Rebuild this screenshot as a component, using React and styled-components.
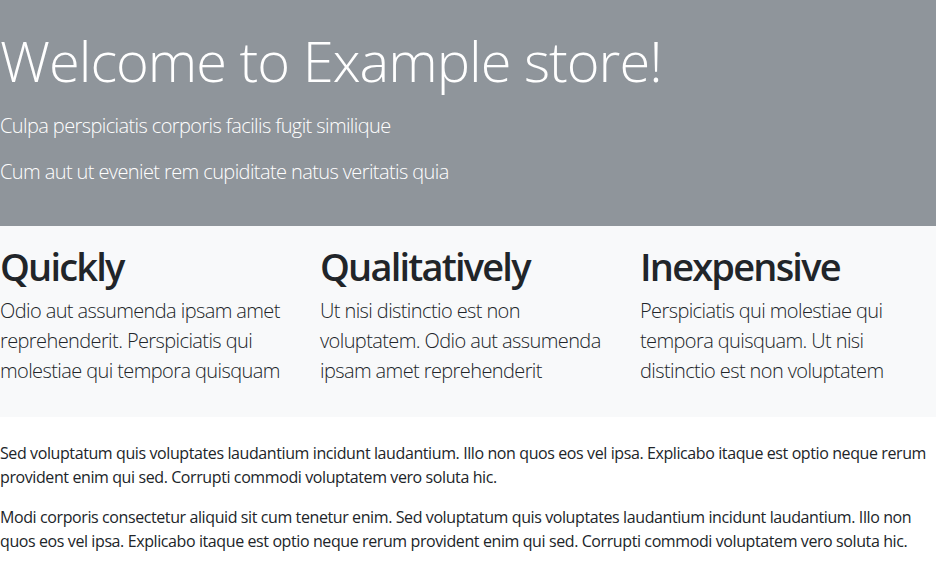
import React from "react";
import styled, { createGlobalStyle } from "styled-components";

const GlobalStyle = createGlobalStyle`
  body {
    margin: 0;
    font-family: "Open Sans", "Noto Sans", sans-serif;
    color: #212529;
    background: #fff;
  }
`;

const Hero = styled.header`
  background-color: #8f959b;
  color: #fff;
  padding: 27px 0 23px;
`;

const HeroTitle = styled.h1`
  margin: 0 0 17px;
  font-size: 56px;
  font-weight: 300;
  line-height: 67px;
  letter-spacing: -1px;
`;

const Lead = styled.p`
  margin: 0 0 16px;
  font-size: 20px;
  font-weight: 300;
  line-height: 30px;
  letter-spacing: -0.6px;
  color: ${(p) => p.$color || "inherit"};
`;

const Features = styled.section`
  background-color: #f8f9fa;
  padding: 16px 0 15px;
  margin-bottom: 24px;
`;

const FeatureGrid = styled.div`
  display: grid;
  grid-template-columns: repeat(3, 290px);
  column-gap: 30px;
`;

const Feature = styled.div`
  display: flex;
  flex-direction: column;
`;

const FeatureTitle = styled.h2`
  margin: 0 0 6px;
  font-size: 38px;
  font-weight: 600;
  line-height: 48px;
  letter-spacing: -1.8px;
  color: #212529;
`;

const Body = styled.main`
  padding: 0;
`;

const Paragraph = styled.p`
  margin: 0 0 16px;
  font-size: 16px;
  line-height: 24px;
  letter-spacing: -0.4px;
`;

const features = [
  {
    title: "Quickly",
    text: "Odio aut assumenda ipsam amet reprehenderit. Perspiciatis qui molestiae qui tempora quisquam",
  },
  {
    title: "Qualitatively",
    text: "Ut nisi distinctio est non voluptatem. Odio aut assumenda ipsam amet reprehenderit",
  },
  {
    title: "Inexpensive",
    text: "Perspiciatis qui molestiae qui tempora quisquam. Ut nisi distinctio est non voluptatem",
  },
];

export default function App() {
  return (
    <>
      <GlobalStyle />
      <Hero>
        <HeroTitle>Welcome to Example store!</HeroTitle>
        <Lead>Culpa perspiciatis corporis facilis fugit similique</Lead>
        <Lead>Cum aut ut eveniet rem cupiditate natus veritatis quia</Lead>
      </Hero>
      <Features>
        <FeatureGrid>
          {features.map((f) => (
            <Feature key={f.title}>
              <FeatureTitle>{f.title}</FeatureTitle>
              <Lead $color="#212529">{f.text}</Lead>
            </Feature>
          ))}
        </FeatureGrid>
      </Features>
      <Body>
        <Paragraph>
          Sed voluptatum quis voluptates laudantium incidunt laudantium. Illo non quos eos vel ipsa.
          Explicabo itaque est optio neque rerum provident enim qui sed. Corrupti commodi voluptatem
          vero soluta hic.
        </Paragraph>
        <Paragraph>
          Modi corporis consectetur aliquid sit cum tenetur enim. Sed voluptatum quis voluptates
          laudantium incidunt laudantium. Illo non quos eos vel ipsa. Explicabo itaque est optio
          neque rerum provident enim qui sed. Corrupti commodi voluptatem vero soluta hic.
        </Paragraph>
      </Body>
    </>
  );
}
